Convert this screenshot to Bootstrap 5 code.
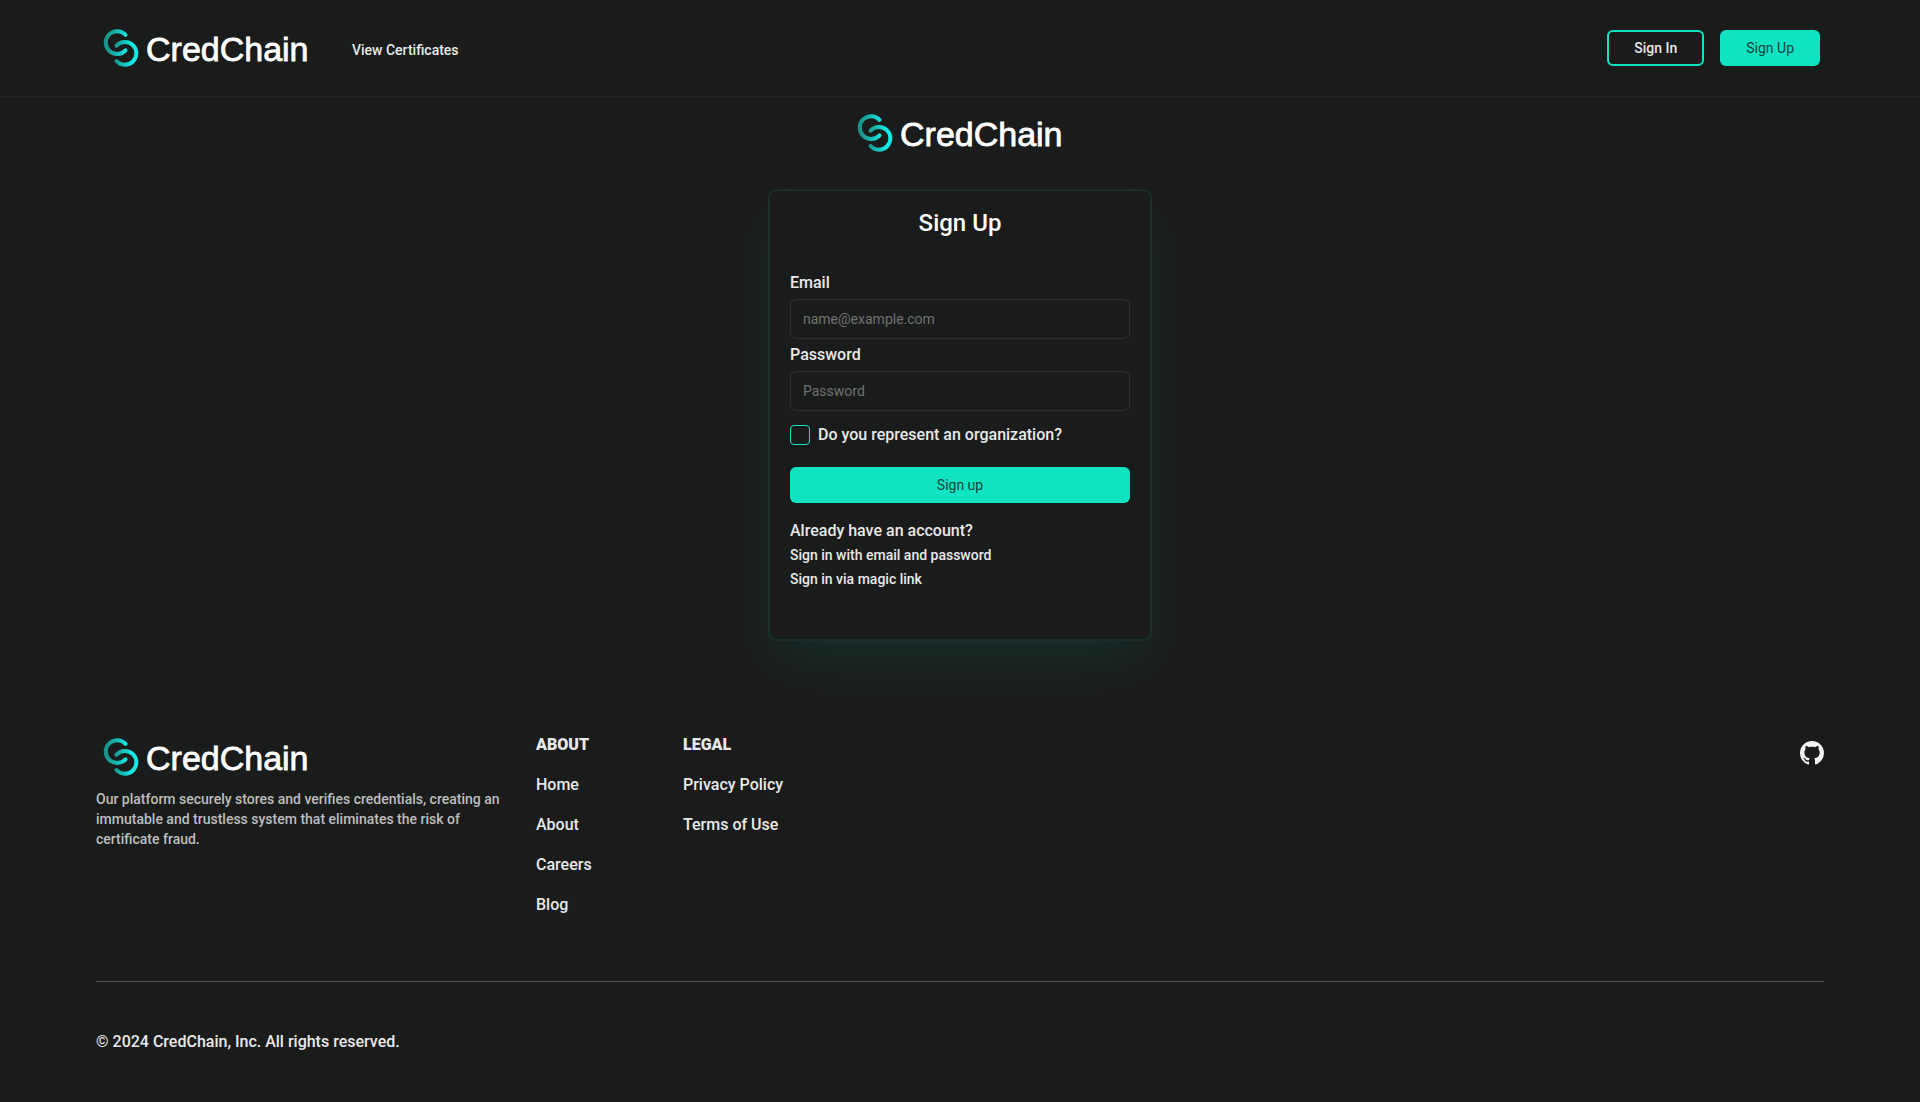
<!DOCTYPE html>
<html lang="en" data-bs-theme="dark">
<head>
<meta charset="utf-8">
<meta name="viewport" content="width=device-width, initial-scale=1">
<title>CredChain - Sign Up</title>
<link href="https://cdn.jsdelivr.net/npm/bootstrap@5.3.0/dist/css/bootstrap.min.css" rel="stylesheet">
<style>
:root{--accent:#10e3c2;--ink:#1a1c1b;--text:#e9e9e9}
body{background:var(--ink);color:var(--text);font-family:Roboto,"Liberation Sans",sans-serif;font-weight:500;font-size:16px;line-height:24px}
a{color:inherit;text-decoration:none}
.site-head{height:97px;padding:0 100px 0 96px;border-bottom:1px solid #222423}
.brand-logo{display:block;width:220px;height:48px}
.logo-word{font-family:"Liberation Sans",sans-serif;font-size:34px;font-weight:400;fill:#fff;stroke:#fff;stroke-width:.8}
.fs-s{font-size:14px;line-height:20px}
.head-link{margin-left:36px}
.btn-accent,.btn-ring{--bs-btn-border-radius:6px;height:36px;font-size:14px;line-height:20px;padding:0 26px 1px}
.btn-accent,.btn-accent:hover{background:var(--accent);color:#14443c;border:0;font-weight:400}
.btn-ring{border:2px solid var(--accent);color:var(--text);font-weight:500;padding:0 25px 1px}
.auth-card{width:384px;max-width:100%;margin-top:32px;border:2px solid #1a2e2b;border-radius:8px;padding:16px 20px 48px;background:var(--ink);box-shadow:0 25px 50px -12px rgba(16,227,194,.1)}
.auth-card h1{font-size:24px;line-height:32px;font-weight:500}
.auth-card .form-control{height:40px;background:transparent;border:1px solid #2d2f2e;border-radius:6px;font-size:14px;padding:0 12px}
.auth-card .form-control::placeholder{color:#707272}
.auth-card .form-check-input{width:20px;height:20px;border-color:var(--accent);border-radius:4px;background-color:transparent}
.org-row{margin:12px 0 20px}
.alt-link{display:block;font-size:14px;line-height:24px}
.site-foot{padding:92px 96px 44px}
.foot-top{padding-bottom:64px}
.blurb{width:408px;margin-right:32px;color:#bdbebe}
.foot-rule{border-top:1px solid #505352}
.foot-nav{width:147px}
.foot-nav b{font-weight:900}
</style>
</head>
<body>
<svg width="0" height="0" class="position-absolute" aria-hidden="true">
<defs>
<linearGradient id="g1" gradientUnits="userSpaceOnUse" x1="7" y1="0" x2="32" y2="0"><stop offset="0" stop-color="#178f84"/><stop offset=".3" stop-color="#1a9f95"/><stop offset="1" stop-color="#14ecea"/></linearGradient>
<linearGradient id="g2" gradientUnits="userSpaceOnUse" x1="17" y1="0" x2="42" y2="0"><stop offset="0" stop-color="#178f84"/><stop offset=".75" stop-color="#14e8e4"/></linearGradient>
<symbol id="logo" viewBox="0 0 220 48">
<g fill="none" stroke-width="4" stroke-linecap="round">
<path d="M29.500 10.800A11.400 11.400 0 1 0 29.500 26.300" stroke="url(#g1)"/>
<path d="M20.500 21.700A11.400 11.400 0 1 1 20.500 37" stroke="url(#g2)"/>
</g>
<text class="logo-word" x="50" y="37">CredChain</text>
</symbol>
</defs>
</svg>
<header class="site-head d-flex align-items-center">
<a href="#" aria-label="CredChain"><svg class="brand-logo"><use href="#logo"/></svg></a>
<a href="#" class="fs-s head-link pt-1 me-auto">View Certificates</a>
<div class="d-flex gap-3">
<button class="btn btn-ring" type="button">Sign In</button>
<button class="btn btn-accent" type="button">Sign Up</button>
</div>
</header>
<main class="d-flex flex-column align-items-center pt-2">
<svg class="brand-logo mt-1" role="img" aria-label="CredChain"><use href="#logo"/></svg>
<form class="auth-card">
<h1 class="text-center mb-4 pb-2">Sign Up</h1>
<label for="email" class="d-block mb-1">Email</label>
<input id="email" type="email" class="form-control" placeholder="name@example.com">
<label for="password" class="d-block mt-1 mb-1">Password</label>
<input id="password" type="password" class="form-control" placeholder="Password">
<div class="org-row d-flex align-items-center gap-2">
<input id="org" type="checkbox" class="form-check-input m-0"><label for="org">Do you represent an organization?</label>
</div>
<button class="btn btn-accent w-100 mb-3" type="button">Sign up</button>
<div>Already have an account?</div>
<a href="#" class="alt-link">Sign in with email and password</a>
<a href="#" class="alt-link">Sign in via magic link</a>
</form>
</main>
<footer class="site-foot">
<div class="foot-top d-flex align-items-start">
<div class="blurb"><svg class="brand-logo mb-2" role="img" aria-label="CredChain"><use href="#logo"/></svg>
<p class="fs-s m-0">Our platform securely stores and verifies credentials, creating an immutable and trustless system that eliminates the risk of certificate fraud.</p></div>
<nav class="foot-nav d-flex flex-column gap-3" aria-label="About"><b>ABOUT</b><a href="#">Home</a><a href="#">About</a><a href="#">Careers</a><a href="#">Blog</a></nav>
<nav class="foot-nav d-flex flex-column gap-3" aria-label="Legal"><b>LEGAL</b><a href="#">Privacy Policy</a><a href="#">Terms of Use</a></nav>
<a href="#" class="ms-auto mt-2" aria-label="GitHub"><svg class="d-block" width="24" height="24" viewBox="0 0 16 16" fill="#f4f4f4"><path d="M8 0C3.580 0 0 3.580 0 8c0 3.540 2.290 6.530 5.470 7.590.4.070.55-.17.55-.38 0-.19-.01-.82-.01-1.490-2.010.37-2.530-.49-2.690-.94-.09-.23-.48-.94-.82-1.130-.28-.15-.68-.52-.01-.53.63-.01 1.080.58 1.230.82.72 1.210 1.870.87 2.330.66.07-.52.28-.87.51-1.070-1.780-.2-3.640-.89-3.640-3.950 0-.87.31-1.590.82-2.150-.08-.2-.36-1.020.08-2.120 0 0 .67-.21 2.200.82.64-.18 1.320-.27 2-.27s1.360.09 2 .27c1.530-1.040 2.200-.82 2.200-.82.44 1.100.16 1.920.08 2.120.51.56.82 1.270.82 2.150 0 3.070-1.870 3.750-3.650 3.950.29.25.54.73.54 1.480 0 1.070-.01 1.930-.01 2.200 0 .21.15.46.55.38A8.010 8.010 0 0 0 16 8c0-4.420-3.580-8-8-8z"/></svg></a>
</div>
<div class="foot-rule pt-5">© 2024 CredChain, Inc. All rights reserved.</div>
</footer>
<script src="https://cdn.jsdelivr.net/npm/bootstrap@5.3.0/dist/js/bootstrap.bundle.min.js"></script>
</body>
</html>
